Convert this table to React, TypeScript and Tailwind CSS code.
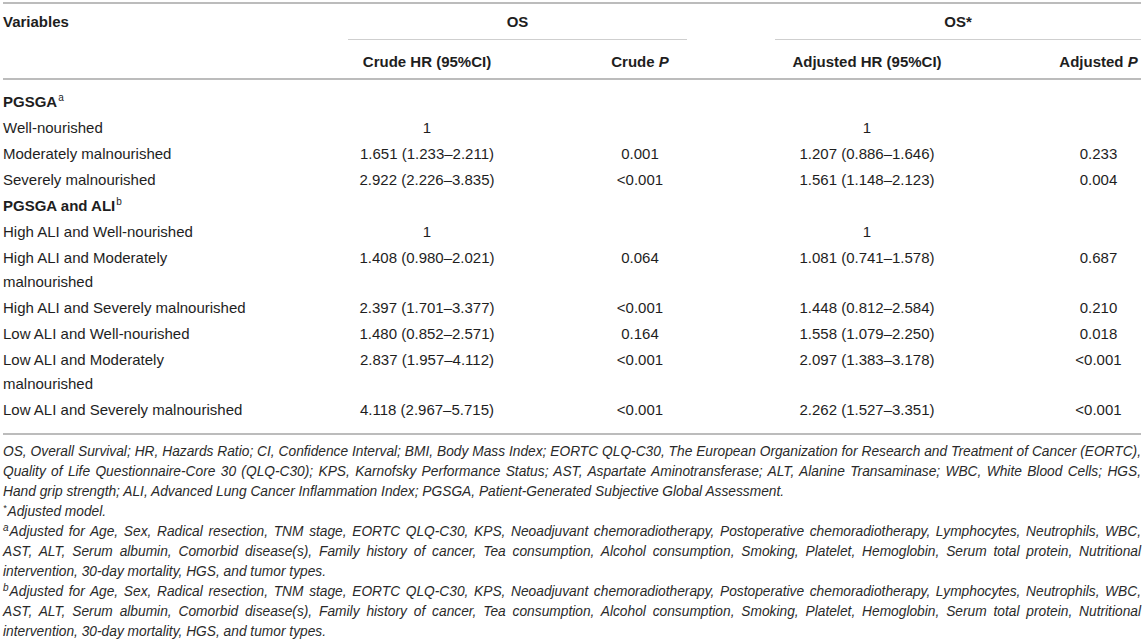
import React from "react";

const COLS = "grid grid-cols-[345px_158px_268px_186px_96px_85px]";

type R = { label: string; bold?: boolean; sup?: string; c1?: string; c2?: string; c3?: string; c4?: string };

const rows: R[] = [
  { label: "PGSGA", bold: true, sup: "a" },
  { label: "Well-nourished", c1: "1", c3: "1" },
  { label: "Moderately malnourished", c1: "1.651 (1.233–2.211)", c2: "0.001", c3: "1.207 (0.886–1.646)", c4: "0.233" },
  { label: "Severely malnourished", c1: "2.922 (2.226–3.835)", c2: "<0.001", c3: "1.561 (1.148–2.123)", c4: "0.004" },
  { label: "PGSGA and ALI", bold: true, sup: "b" },
  { label: "High ALI and Well-nourished", c1: "1", c3: "1" },
  { label: "High ALI and Moderately\nmalnourished", c1: "1.408 (0.980–2.021)", c2: "0.064", c3: "1.081 (0.741–1.578)", c4: "0.687" },
  { label: "High ALI and Severely malnourished", c1: "2.397 (1.701–3.377)", c2: "<0.001", c3: "1.448 (0.812–2.584)", c4: "0.210" },
  { label: "Low ALI and Well-nourished", c1: "1.480 (0.852–2.571)", c2: "0.164", c3: "1.558 (1.079–2.250)", c4: "0.018" },
  { label: "Low ALI and Moderately\nmalnourished", c1: "2.837 (1.957–4.112)", c2: "<0.001", c3: "2.097 (1.383–3.178)", c4: "<0.001" },
  { label: "Low ALI and Severely malnourished", c1: "4.118 (2.967–5.715)", c2: "<0.001", c3: "2.262 (1.527–3.351)", c4: "<0.001" },
];

function J({ children }: { children: React.ReactNode }) {
  return <div className="text-justify [text-align-last:justify] whitespace-nowrap">{children}</div>;
}

function Sup({ children, size = "text-[10px]" }: { children: React.ReactNode; size?: string }) {
  return <span className={`${size} leading-none font-normal relative top-[-5px] mr-px`}>{children}</span>;
}

export default function App() {
  return (
    <div className="w-[1144px] h-[640px] bg-white px-[3px] pt-[2px] text-[#1e1e1e] overflow-hidden" style={{ fontFamily: '"Liberation Sans", Arial, sans-serif' }}>
      <div className="h-[2px] bg-[#bcbcbc]" />
      {/* header row 1 */}
      <div className={`${COLS} text-[15px] font-bold leading-[23px]`}>
        <div className="pt-[6px] pb-[7px]">Variables</div>
        <div className="col-span-2 mr-[87px] pt-[6px] pb-[6px] text-center border-b border-[#cfcfcf]">OS</div>
        <div className="col-span-3 ml-px pt-[6px] pb-[6px] text-center border-b border-[#cfcfcf]">OS*</div>
      </div>
      {/* header row 2 */}
      <div className={`${COLS} text-[15px] font-bold leading-[23px] pt-[10px] pb-[5px]`}>
        <div />
        <div className="text-center">Crude HR (95%CI)</div>
        <div className="text-center">Crude <i>P</i></div>
        <div className="text-center">Adjusted HR (95%CI)</div>
        <div />
        <div className="text-center whitespace-nowrap">Adjusted <i>P</i></div>
      </div>
      <div className="h-[2px] bg-[#bcbcbc]" />
      {/* body */}
      <div className="pt-[9px] pb-[10px] text-[15px] leading-[24px]">
        {rows.map((r, i) => (
          <div key={i} className={`${COLS} py-px`}>
            <div className={`whitespace-pre-line ${r.bold ? "font-bold" : ""}`}>
              {r.label}
              {r.sup && <span className="text-[10px] leading-none font-normal relative top-[-6px] ml-px">{r.sup}</span>}
            </div>
            <div className="text-center">{r.c1}</div>
            <div className="text-center">{r.c2}</div>
            <div className="text-center">{r.c3}</div>
            <div />
            <div className="text-center">{r.c4}</div>
          </div>
        ))}
      </div>
      <div className="h-[2px] bg-[#bcbcbc]" />
      {/* footnotes */}
      <div className="pt-[7px] italic text-[13.75px] leading-[20px] text-[#2a2a2a]">
        <J>OS, Overall Survival; HR, Hazards Ratio; CI, Confidence Interval; BMI, Body Mass Index; EORTC QLQ-C30, The European Organization for Research and Treatment of Cancer (EORTC),</J>
        <J>Quality of Life Questionnaire-Core 30 (QLQ-C30); KPS, Karnofsky Performance Status; AST, Aspartate Aminotransferase; ALT, Alanine Transaminase; WBC, White Blood Cells; HGS,</J>
        <div>Hand grip strength; ALI, Advanced Lung Cancer Inflammation Index; PGSGA, Patient-Generated Subjective Global Assessment.</div>
        <div><Sup size="text-[9px]">*</Sup>Adjusted model.</div>
        <J><Sup>a</Sup>Adjusted for Age, Sex, Radical resection, TNM stage, EORTC QLQ-C30, KPS, Neoadjuvant chemoradiotherapy, Postoperative chemoradiotherapy, Lymphocytes, Neutrophils, WBC,</J>
        <J>AST, ALT, Serum albumin, Comorbid disease(s), Family history of cancer, Tea consumption, Alcohol consumption, Smoking, Platelet, Hemoglobin, Serum total protein, Nutritional</J>
        <div>intervention, 30-day mortality, HGS, and tumor types.</div>
        <J><Sup>b</Sup>Adjusted for Age, Sex, Radical resection, TNM stage, EORTC QLQ-C30, KPS, Neoadjuvant chemoradiotherapy, Postoperative chemoradiotherapy, Lymphocytes, Neutrophils, WBC,</J>
        <J>AST, ALT, Serum albumin, Comorbid disease(s), Family history of cancer, Tea consumption, Alcohol consumption, Smoking, Platelet, Hemoglobin, Serum total protein, Nutritional</J>
        <div>intervention, 30-day mortality, HGS, and tumor types.</div>
      </div>
    </div>
  );
}
